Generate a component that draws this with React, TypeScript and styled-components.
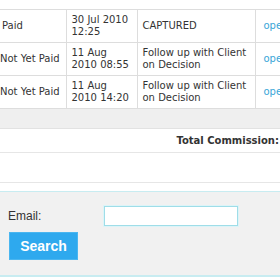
import styled, { createGlobalStyle } from 'styled-components';

const GlobalStyle = createGlobalStyle`
  html, body {
    margin: 0;
    padding: 0;
    background: #ffffff;
  }
`;

interface Deal {
  payment: string;
  date: string;
  time: string;
  status: string[];
}

const deals: Deal[] = [
  { payment: 'Paid', date: '30 Jul 2010', time: '12:25', status: ['CAPTURED'] },
  { payment: 'Not Yet Paid', date: '11 Aug', time: '2010 08:55', status: ['Follow up with Client', 'on Decision'] },
  { payment: 'Not Yet Paid', date: '11 Aug', time: '2010 14:20', status: ['Follow up with Client', 'on Decision'] },
];

// Styled Components
const Page = styled.div`
  width: 280px;
  height: 280px;
  overflow: hidden;
  font-family: 'DejaVu Sans', Verdana, sans-serif;
  color: #333333;
`;

const TableWrapper = styled.div`
  width: 280px;
  overflow: hidden;
  padding-top: 9px;
`;

const StyledTable = styled.table`
  width: 323px;
  margin-left: -3px;
  border-collapse: collapse;
  table-layout: fixed;
  font-size: 10px;
  line-height: 12px;
`;

const DataRow = styled.tr<{ $height: number }>`
  height: ${(p) => p.$height}px;
  border-top: 1px solid #dddddd;
`;

const Cell = styled.td<{ $indent?: number }>`
  padding: 4px 5px 4px ${(p) => p.$indent ?? 5}px;
  border-left: 1px solid #dddddd;
  vertical-align: middle;
  white-space: nowrap;
  overflow: hidden;

  &:first-child {
    border-left: none;
  }
`;

const ActionLink = styled.a`
  color: #3aa6d8;
  text-decoration: none;
`;

const BandRow = styled.tr`
  height: 20px;
  background: #efefef;
  border-top: 1px solid #dddddd;
  border-bottom: 1px solid #e2e2e2;
`;

const TotalRow = styled.tr`
  height: 24px;
  border-bottom: 1px solid #e6e6e6;
`;

const TotalCell = styled.td`
  padding: 0 41px 0 0;
  text-align: right;
  font-weight: bold;
  font-size: 10px;
`;

const EmptyRow = styled.tr`
  height: 30px;
  border-bottom: 1px solid #e6e6e6;
`;

const SearchPanel = styled.div`
  margin-top: 8px;
  padding: 14px 0 15px 8px;
  background: #f1f1f1;
  border-top: 1px solid #c8ecf1;
  border-bottom: 2px solid #c8ecf1;
  font-family: 'Liberation Sans', Arial, sans-serif;
`;

const FieldRow = styled.div`
  display: grid;
  grid-template-columns: 96px 134px;
  align-items: center;
`;

const Label = styled.label`
  font-size: 12px;
  color: #333333;
`;

const EmailInput = styled.input`
  box-sizing: border-box;
  width: 134px;
  height: 20px;
  border: 1px solid #9fdde8;
  box-shadow: 0 0 0 1px #dcf4f8;
  background: #ffffff;
  outline: none;
`;

const SearchButton = styled.button`
  display: block;
  margin: 6px 0 0 1px;
  width: 69px;
  height: 28px;
  padding: 0;
  border: 1px solid #4ab6f0;
  background: #2ea9ee;
  color: #ffffff;
  font-family: 'Liberation Sans', Arial, sans-serif;
  font-size: 14px;
  font-weight: bold;
`;

export default function App() {
  return (
    <Page>
      <GlobalStyle />
      <TableWrapper>
        <StyledTable>
          <colgroup>
            <col style={{ width: 69 }} />
            <col style={{ width: 71 }} />
            <col style={{ width: 118 }} />
            <col style={{ width: 65 }} />
          </colgroup>
          <tbody>
            {deals.map((d, i) => (
              <DataRow key={i} $height={i === 2 ? 31 : 33}>
                <Cell $indent={d.payment === 'Paid' ? 5 : 3}>{d.payment}</Cell>
                <Cell>
                  {d.date}
                  <br />
                  {d.time}
                </Cell>
                <Cell>
                  {d.status.map((line, j) => (
                    <div key={j}>{line}</div>
                  ))}
                </Cell>
                <Cell $indent={8}>
                  <ActionLink href="#">open</ActionLink>
                </Cell>
              </DataRow>
            ))}
            <BandRow>
              <td colSpan={4} />
            </BandRow>
            <TotalRow>
              <TotalCell colSpan={4}>Total Commission:</TotalCell>
            </TotalRow>
            <EmptyRow>
              <td colSpan={4} />
            </EmptyRow>
          </tbody>
        </StyledTable>
      </TableWrapper>
      <SearchPanel>
        <FieldRow>
          <Label htmlFor="email">Email:</Label>
          <EmailInput id="email" type="text" />
        </FieldRow>
        <SearchButton type="button">Search</SearchButton>
      </SearchPanel>
    </Page>
  );
}
